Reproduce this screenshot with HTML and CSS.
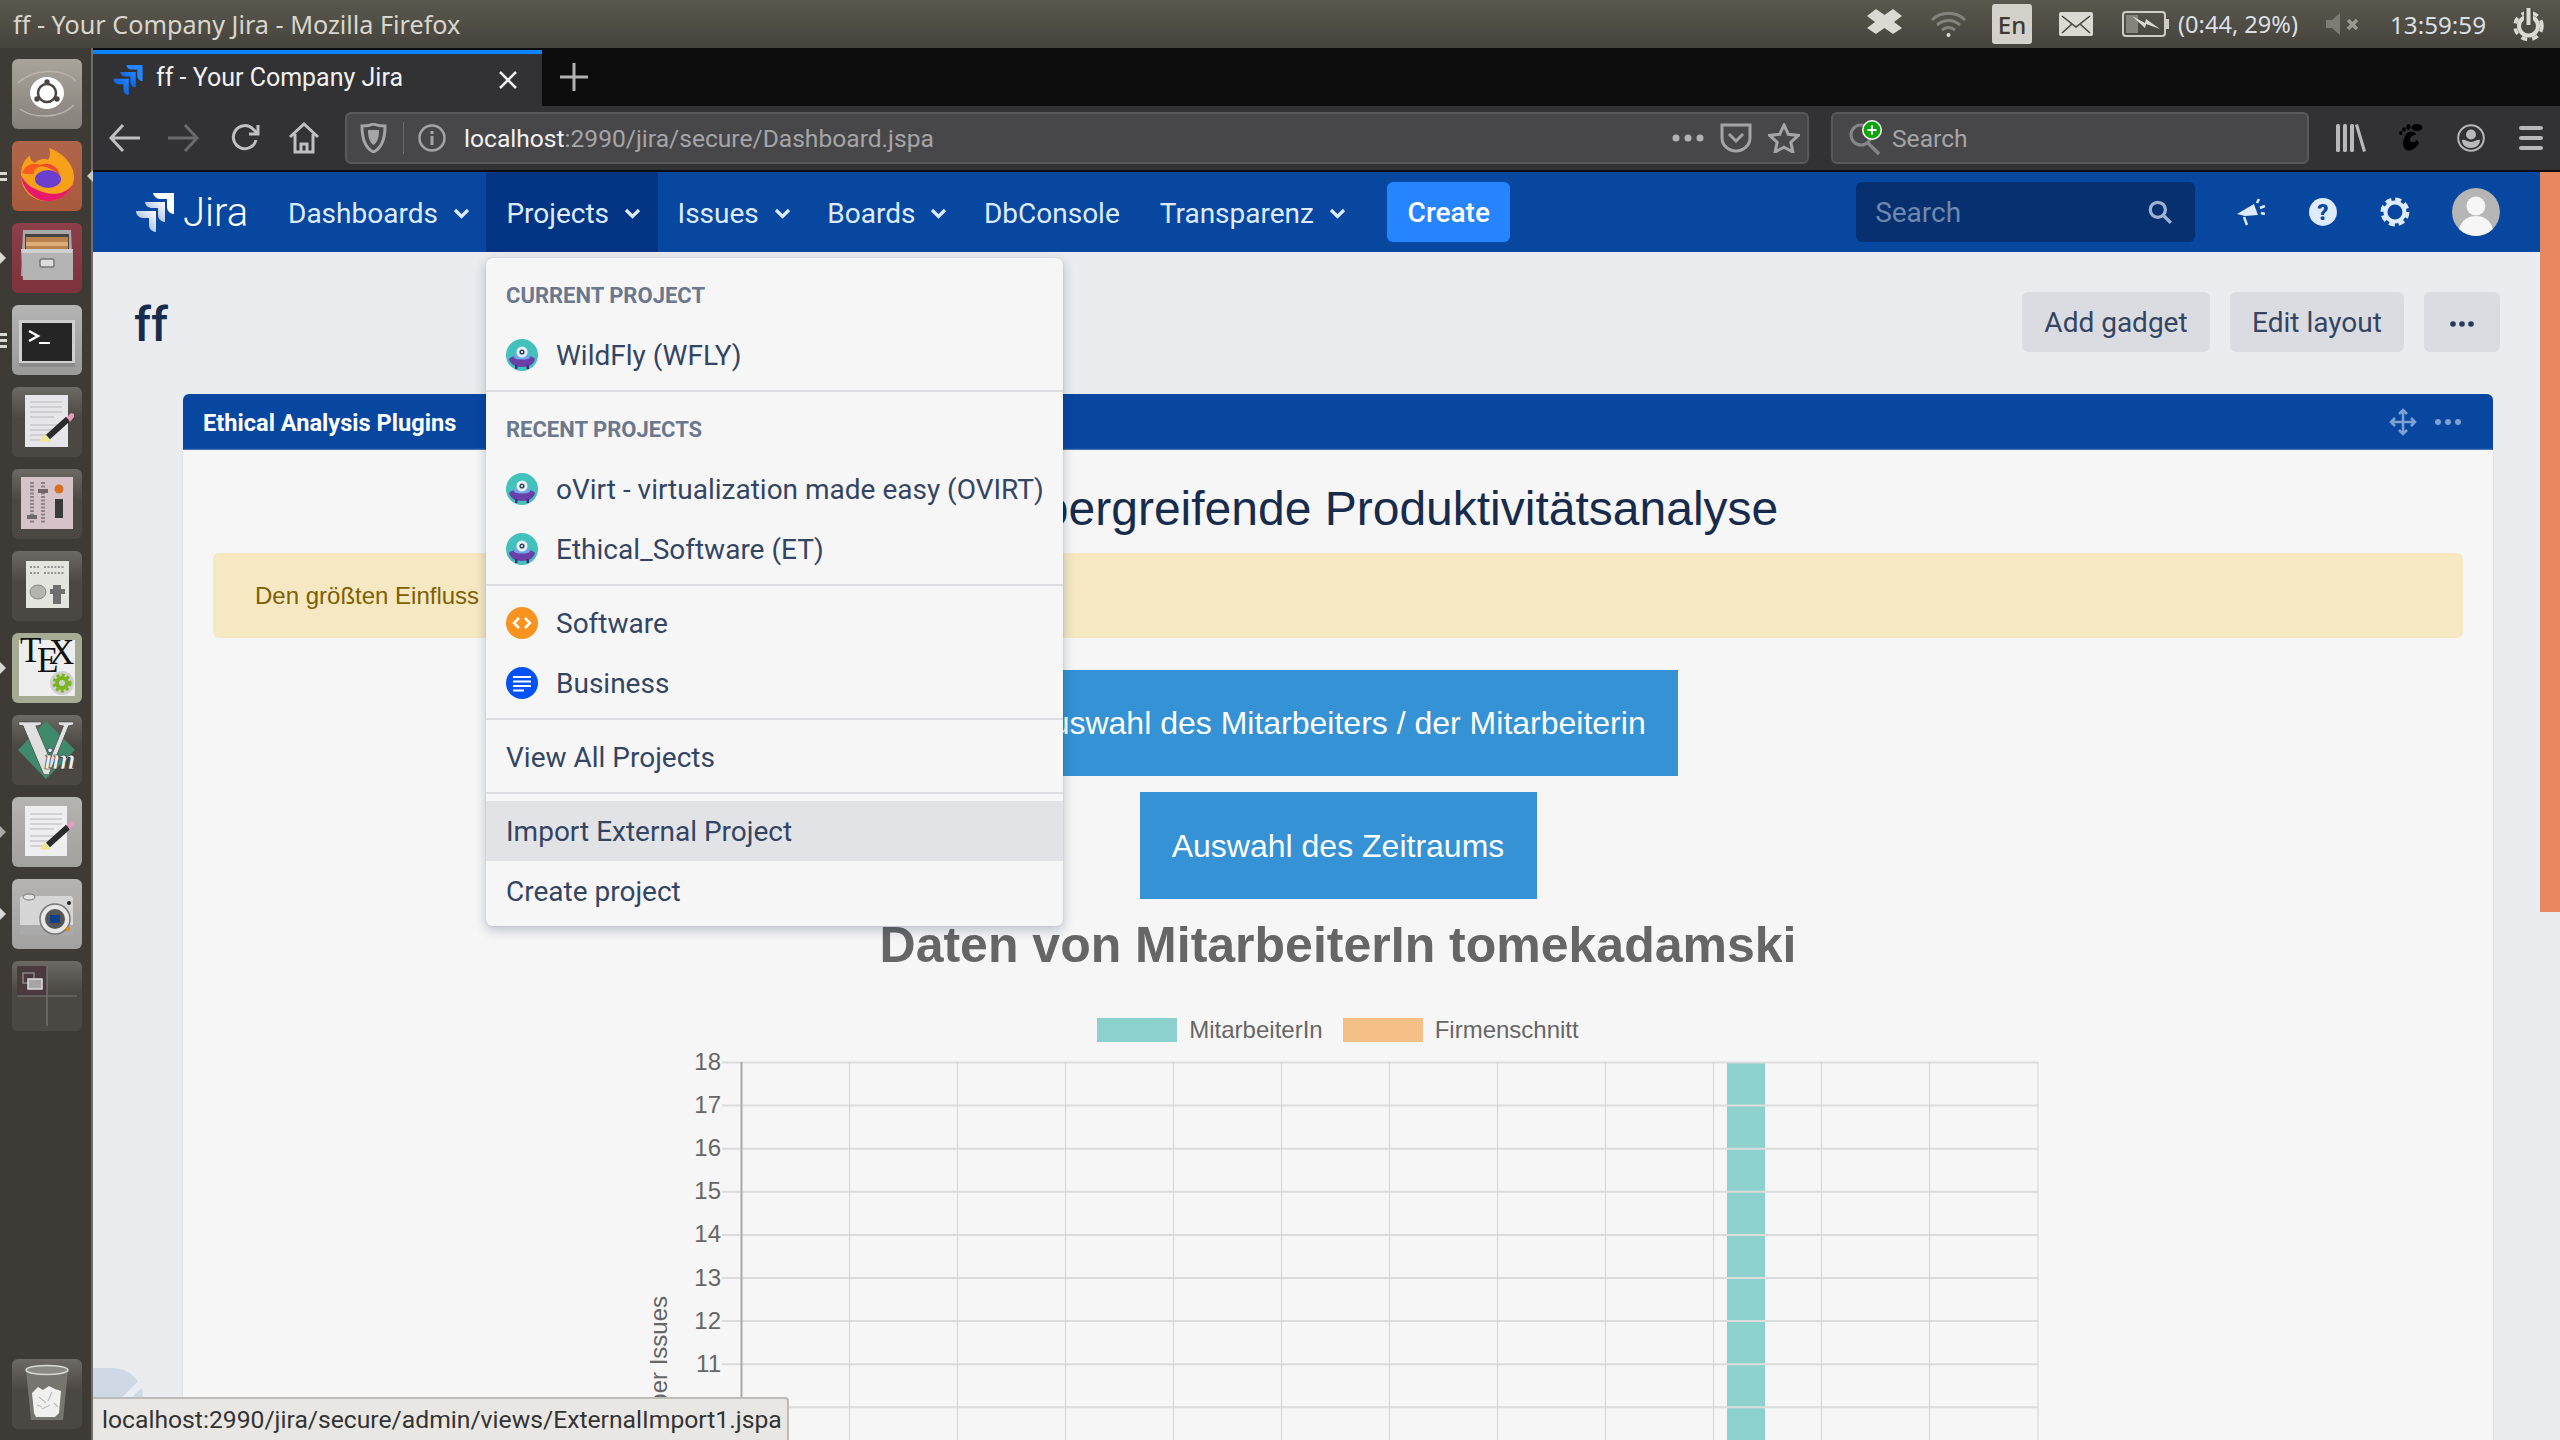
FILE: index.html
```html
<!DOCTYPE html>
<html lang="en">
<head>
<meta charset="utf-8">
<title>ff - Your Company Jira - Mozilla Firefox</title>
<link rel="stylesheet" href="styles.css">
</head>
<body>
<svg class="defs" width="0" height="0">
  <defs>
    <linearGradient id="jfade" x1="1" y1="0" x2="0" y2="1"><stop offset="0" stop-color="#fff"/><stop offset="1" stop-color="#7f9fd6"/></linearGradient>
    <linearGradient id="bfade" x1="1" y1="0" x2="0" y2="1"><stop offset="0" stop-color="#2684ff"/><stop offset="1" stop-color="#0052cc"/></linearGradient>
    <symbol id="saucer" viewBox="0 0 32 32">
      <circle cx="16" cy="16" r="16" fill="#42c1bd"/>
      <path d="M3 20c4-5 22-5 26 0-1 5-6 8-13 8S4 25 3 20z" fill="#6b3fa8"/>
      <rect x="9" y="26" width="2.5" height="4" fill="#4b2a80"/><rect x="20.5" y="26" width="2.5" height="4" fill="#4b2a80"/>
      <path d="M8 19a8 8 0 0 1 16 0c-4 2-12 2-16 0z" fill="#6ea8e6"/>
      <circle cx="16" cy="13" r="5.5" fill="#e8f0fb"/><circle cx="16" cy="13" r="2.6" fill="#345"/><circle cx="16" cy="13" r="1" fill="#fff"/>
    </symbol>
  </defs>
</svg>

<header class="topbar">
  <div class="win-title">ff - Your Company Jira - Mozilla Firefox</div>
  <div class="tray">
    <svg class="tr-dropbox" width="35" height="30" viewBox="0 0 35 30"><path d="M9 0l8.500 6L26 0l9 7-8 6 8 6-9 6-8.500-6L9 25l-9-6 8-6-8-6z" fill="#dcd9d2"/></svg>
    <svg class="tr-wifi" width="37" height="28" viewBox="0 0 37 28" fill="none" stroke="#85837c" stroke-width="3"><path d="M2 10c9-9 24-9 33 0"/><path d="M7 15c7-6 16-6 23 0"/><path d="M12 20c4-3 9-3 13 0"/><circle cx="18.500" cy="25" r="2" fill="#dcd9d2" stroke="none"/></svg>
    <div class="tr-en">En</div>
    <svg class="tr-mail" width="34" height="24" viewBox="0 0 34 24"><rect width="34" height="24" rx="2" fill="#dcd9d2"/><path d="M3 4l14 11L31 4M3 21l10-9M31 21l-10-9" fill="none" stroke="#45433c" stroke-width="1.500"/></svg>
    <svg class="tr-batt" width="48" height="26" viewBox="0 0 48 26"><rect x="1" y="1" width="42" height="24" rx="3" fill="none" stroke="#cfccc5" stroke-width="2"/><rect x="4" y="4" width="12" height="18" fill="#85837c"/><rect x="44" y="8" width="3" height="10" fill="#cfccc5"/><path d="M10 5l13 7 1-4 14 10-14-5-1 4z" fill="#dcd9d2"/></svg>
    <div class="tr-text tr-pct">(0:44, 29%)</div>
    <svg class="tr-mute" width="34" height="24" viewBox="0 0 34 24"><path d="M0 8h6l8-7v22l-8-7H0z" fill="#7d7b74"/><path d="M22 8l9 9m0-9l-9 9" stroke="#9a9890" stroke-width="3.500"/></svg>
    <div class="tr-text tr-clock">13:59:59</div>
    <svg class="tr-power" width="33" height="33" viewBox="0 0 33 33"><circle cx="16.500" cy="18" r="9.500" fill="none" stroke="#dcd9d2" stroke-width="4"/><circle cx="16.500" cy="18" r="13.500" fill="none" stroke="#dcd9d2" stroke-width="3.500" stroke-dasharray="6 5.200"/><rect x="12" y="0" width="9" height="18" fill="#4d4a42"/><rect x="14.500" y="0" width="4" height="17" fill="#dcd9d2"/></svg>
  </div>
</header>

<div class="desktop">
  <aside class="launcher">
    <div class="tile t-dash">
      <svg width="70" height="70" viewBox="0 0 70 70"><path d="M6 24c14-14 44-16 58-2M8 50c14 10 40 10 54-4" fill="none" stroke="#b9b5ad" stroke-width="1.500"/><ellipse cx="35" cy="34" rx="17" ry="16" fill="#fff"/><circle cx="35" cy="34" r="9" fill="none" stroke="#4a4540" stroke-width="2.500"/><circle cx="35" cy="23" r="2.700" fill="#4a4540"/><circle cx="25" cy="40" r="2.700" fill="#4a4540"/><circle cx="45" cy="40" r="2.700" fill="#4a4540"/></svg>
    </div>
    <div class="tile t-fox">
      <span class="pip pip-l pip-double"></span><span class="pip pip-r"></span>
      <svg width="70" height="70" viewBox="0 0 70 70"><path d="M9 34C9 22 15 16 18 15c0 4 2 5 5 7 3-4 10-5 13-3 3-5 2-9 1-12 12 4 25 15 25 29 0 13-12 24-27 24S9 49 9 34z" fill="#f7a11b"/><path d="M9 34c1 13 12 26 27 26 12 0 22-8 25-17-5 8-16 12-27 9C23 49 13 44 9 34z" fill="#e8186c"/><path d="M10 32c3-8 12-12 20-7-5 1-9 4-8 8-5 0-9 0-12-1z" fill="#f9591f"/><ellipse cx="36" cy="38" rx="13" ry="9" fill="#6a3fd0"/><path d="M26 25c8-5 20-2 22 10-6-7-14-10-22-10z" fill="#ef4a2a"/></svg>
    </div>
    <div class="tile t-files">
      <span class="pip pip-l"></span>
      <svg width="70" height="70" viewBox="0 0 70 70"><path d="M11 7h48l2 46H9z" fill="#a8a8a8"/><rect x="13" y="11" width="44" height="15" fill="#444"/><rect x="14" y="14" width="42" height="12" fill="#b9814c"/><rect x="14" y="19" width="42" height="4" fill="#e0ad78"/><path d="M9 26h52v31H11z" fill="#b4b4b4"/><path d="M9 26h52l-1 4H10z" fill="#d0d0d0"/><rect x="28" y="36" width="14" height="8" rx="2" fill="#dcdcdc" stroke="#777" stroke-width="1.500"/></svg>
    </div>
    <div class="tile t-term">
      <span class="pip pip-l pip-triple"></span>
      <svg width="70" height="70" viewBox="0 0 70 70"><rect x="7" y="15" width="56" height="47" fill="#cfcfcf"/><rect x="7" y="58" width="56" height="4" fill="#8b8b8b"/><rect x="10" y="18" width="50" height="38" fill="#252525"/><path d="M17 26l9 5-9 5" fill="none" stroke="#fff" stroke-width="2.500"/><rect x="27" y="37" width="11" height="2" fill="#fff"/></svg>
    </div>
    <div class="tile t-dark">
      <svg width="70" height="70" viewBox="0 0 70 70"><rect x="13" y="8" width="43" height="52" fill="#e6e6ea"/><g stroke="#b7b7bd" stroke-width="1"><path d="M18 15h32M18 20h32M18 25h32M18 30h24M18 38h32M18 43h24M18 48h18M18 53h14"/></g><path d="M36 50l20-18" stroke="#2b2b2b" stroke-width="6"/><path d="M55 30l4-4 3 1 0 3-4 5z" fill="#e59ac0"/><path d="M32 47l7 7-6 1-5-1z" fill="#eee691"/></svg>
    </div>
    <div class="tile t-dark">
      <svg width="70" height="70" viewBox="0 0 70 70"><rect x="9" y="8" width="52" height="52" fill="#d6c3ca"/><g stroke="#8b8589" stroke-width="4" stroke-dasharray="2 1.500"><path d="M20 13v42M31 13v42"/></g><rect x="15" y="46" width="10" height="4" fill="#6d6668"/><rect x="26" y="20" width="10" height="4" fill="#6d6668"/><circle cx="47" cy="20" r="4.500" fill="#d9701f"/><rect x="43" y="30" width="8" height="19" fill="#3a3a3a"/></svg>
    </div>
    <div class="tile t-dark">
      <svg width="70" height="70" viewBox="0 0 70 70"><rect x="14" y="10" width="43" height="47" fill="#e4e4df"/><g stroke="#777" stroke-width="1.500" stroke-dasharray="2 1.500"><path d="M18 16h10M32 16h20M18 22h10M32 22h20"/></g><ellipse cx="26" cy="41" rx="8" ry="7" fill="#b4b4af" stroke="#888"/><path d="M41 34h8v4h4v5h-4v10h-8V43h-3v-5h3z" fill="#6e6e6e"/></svg>
    </div>
    <div class="tile t-tex">
      <span class="pip pip-l"></span>
      <svg width="70" height="70" viewBox="0 0 70 70"><rect x="7" y="7" width="56" height="56" fill="#eeeeee"/><text class="tex" x="8" y="29">T</text><text class="tex" x="25" y="39">E</text><text class="tex" x="37" y="31">X</text><circle cx="50" cy="50" r="12" fill="#cfcfcf"/><circle cx="50" cy="50" r="5" fill="none" stroke="#7ab51d" stroke-width="4"/><circle cx="50" cy="50" r="8" fill="none" stroke="#7ab51d" stroke-width="3" stroke-dasharray="3 2.300"/></svg>
    </div>
    <div class="tile t-dark">
      <svg width="70" height="70" viewBox="0 0 70 70"><path d="M34 6l29 29-29 29L6 35z" fill="#3f8a6d"/><text class="vim-v" x="6" y="58">V</text><text class="vim-im" x="32" y="54">im</text></svg>
    </div>
    <div class="tile t-light">
      <span class="pip pip-l pip-hollow"></span>
      <svg width="70" height="70" viewBox="0 0 70 70"><rect x="13" y="9" width="42" height="50" fill="#eeeef1"/><g stroke="#b7b7bd" stroke-width="1"><path d="M18 17h32M18 22h32M18 27h32M18 32h24M18 39h32M18 44h22M18 49h16"/></g><path d="M36 48l20-18" stroke="#2b2b2b" stroke-width="6"/><path d="M55 28l4-4 3 1 0 3-4 5z" fill="#e59ac0"/><path d="M32 45l7 7-6 1-5-1z" fill="#eee691"/></svg>
    </div>
    <div class="tile t-light">
      <span class="pip pip-l"></span>
      <svg width="70" height="70" viewBox="0 0 70 70"><rect x="8" y="17" width="53" height="39" rx="3" fill="#d6d6d6"/><rect x="8" y="46" width="53" height="10" fill="#aaa"/><ellipse cx="17" cy="18" rx="6" ry="3" fill="#e2e2e2" stroke="#777"/><circle cx="43" cy="40" r="15" fill="#e6e6e6" stroke="#777" stroke-width="1.500"/><circle cx="43" cy="40" r="10" fill="#555"/><rect x="38" y="36" width="10" height="8" fill="#0f3f8a"/><circle cx="57" cy="24" r="2" fill="#222"/><rect x="54" y="48" width="4" height="4" fill="#e08a1a"/></svg>
    </div>
    <div class="tile t-dark t-work">
      <svg width="70" height="70" viewBox="0 0 70 70"><rect x="5" y="5" width="30" height="30" fill="#4a3a40"/><path d="M35 5v60M5 35h60" stroke="#7c7a76" stroke-width="1.200"/><rect x="11" y="12" width="11" height="10" fill="none" stroke="#888" stroke-width="1.500"/><rect x="16" y="18" width="14" height="10" fill="#a8a4a6" stroke="#ddd" stroke-width="1.500"/></svg>
    </div>
    <div class="tile t-dark t-trash">
      <svg width="70" height="70" viewBox="0 0 70 70"><path d="M14 11h42l-5 50H19z" fill="#77756f"/><ellipse cx="35" cy="11" rx="21" ry="4.500" fill="#8b8a85" stroke="#d8d8d5" stroke-width="1.500"/><path d="M20 34l6-6 5 3 6-4 6 3 6 2-2 22-4 4H24l-2-4z" fill="#f0f0ee"/><path d="M27 38l7 6M40 33l-4 9M30 50l8-4M25 46l5 2M42 44l4 4" stroke="#bdbdbb" stroke-width="1.200"/></svg>
    </div>
  </aside>

  <div class="browser">
    <div class="tabbar">
      <div class="tab">
        <svg class="tab-logo" width="30" height="30" viewBox="0 0 38 39">
          <path d="M17 0h21v21a7 7 0 0 1-7-7V6h-7a7 7 0 0 1-7-6z" fill="#2684ff"/>
          <path d="M9 9h20v20a7 7 0 0 1-7-7v-7h-7a7 7 0 0 1-6-6z" fill="url(#bfade)"/>
          <path d="M0 18h20v21a7 7 0 0 1-7-7v-7H7a7 7 0 0 1-7-7z" fill="url(#bfade)"/>
        </svg>
        <span class="tab-title">ff - Your Company Jira</span>
        <svg class="tab-close" width="20" height="20" viewBox="0 0 20 20"><path d="M2 2l16 16M18 2L2 18" stroke="#f1f1f1" stroke-width="2.500"/></svg>
      </div>
      <svg class="tab-new" width="28" height="30" viewBox="0 0 28 30"><path d="M14 1v28M0 15h28" stroke="#b1b1b3" stroke-width="3"/></svg>
    </div>

    <div class="toolbar">
      <svg class="tb-back" width="32" height="30" viewBox="0 0 32 30" fill="none" stroke="#c0c0c2" stroke-width="3"><path d="M32 15H3M15 2L3 15l12 13"/></svg>
      <svg class="tb-fwd" width="32" height="30" viewBox="0 0 32 30" fill="none" stroke="#6a6a6c" stroke-width="3"><path d="M0 15h29M17 2l12 13-12 13"/></svg>
      <svg class="tb-reload" width="30" height="30" viewBox="0 0 30 30" fill="none" stroke="#c0c0c2" stroke-width="3"><path d="M26 17a11.500 11.500 0 1 1-3-11l5 5"/><path d="M28 2v9h-9" /></svg>
      <svg class="tb-home" width="32" height="32" viewBox="0 0 32 32" fill="none" stroke="#c0c0c2" stroke-width="3"><path d="M2 15L16 2l14 13M7 12v18h18V12M13 30v-8h6v8"/></svg>
      <div class="urlbar">
        <svg class="ub-shield" width="27" height="30" viewBox="0 0 27 30"><path d="M2 3c7 0 9-1 11.500-2C16 2 18 3 25 3c0 13-3 22-11.500 26C5 25 2 16 2 3z" fill="none" stroke="#a5a5a7" stroke-width="3"/><path d="M8 7h11c0 8-2 13-5.500 15C10 20 8 15 8 7z" fill="#a5a5a7"/></svg>
        <span class="ub-sep"></span>
        <svg class="ub-info" width="28" height="28" viewBox="0 0 28 28"><circle cx="14" cy="14" r="12.500" fill="none" stroke="#a5a5a7" stroke-width="2.500"/><rect x="12.500" y="12" width="3" height="9" fill="#a5a5a7"/><rect x="12.500" y="7" width="3" height="3" fill="#a5a5a7"/></svg>
        <div class="ub-url"><span class="ub-host">localhost</span>:2990/jira/secure/Dashboard.jspa</div>
        <svg class="ub-dots" width="32" height="8" viewBox="0 0 32 8" fill="#b1b1b3"><circle cx="4" cy="4" r="3.500"/><circle cx="16" cy="4" r="3.500"/><circle cx="28" cy="4" r="3.500"/></svg>
        <svg class="ub-pocket" width="32" height="30" viewBox="0 0 32 30" fill="none" stroke="#a5a5a7" stroke-width="3"><path d="M2 2h28v13a14 13 0 0 1-28 0z"/><path d="M9 11l7 7 7-7"/></svg>
        <svg class="ub-star" width="32" height="30" viewBox="0 0 32 30"><path d="M16 2l4.300 9.300 10 1.100-7.500 6.800 2.100 9.800L16 24.100 7.100 29l2.100-9.800-7.500-6.800 10-1.100z" fill="none" stroke="#a5a5a7" stroke-width="3"/></svg>
      </div>
      <div class="searchbar">
        <svg class="sb-icon" width="34" height="36" viewBox="0 0 34 36"><circle cx="13" cy="15" r="10" fill="none" stroke="#858587" stroke-width="3"/><path d="M20 23l11 11" stroke="#858587" stroke-width="3.500"/><circle cx="24" cy="10" r="10" fill="#fff"/><circle cx="24" cy="10" r="8.500" fill="#0ca50c"/><path d="M24 5.500v9M19.500 10h9" stroke="#fff" stroke-width="2"/></svg>
        <span class="sb-text">Search</span>
      </div>
      <svg class="tb-lib" width="30" height="28" viewBox="0 0 30 28" fill="#b8b8ba"><rect x="0" y="0" width="4" height="28" rx="1.500"/><rect x="7" y="0" width="4" height="28" rx="1.500"/><rect x="14" y="0" width="4" height="28" rx="1.500"/><path d="M19 1l3-1 8 27-3 1z"/></svg>
      <svg class="tb-foot" width="24" height="28" viewBox="0 0 24 28" fill="#000"><ellipse cx="1.800" cy="9" rx="1.600" ry="2"/><ellipse cx="5" cy="5.500" rx="1.700" ry="2.200"/><ellipse cx="9.500" cy="3" rx="2.200" ry="2.700"/><ellipse cx="18" cy="3.500" rx="5.500" ry="3.500"/><path d="M8 9c5-3 9-1 9 2-4 0-6 2-6 5 0 3 4 3 7 0l2 3c-3 6-10 10-14 6-4-5-1-12 2-16z"/></svg>
      <svg class="tb-user" width="28" height="28" viewBox="0 0 28 28"><circle cx="14" cy="14" r="12.800" fill="none" stroke="#b8b8ba" stroke-width="2"/><circle cx="14" cy="10.500" r="5" fill="#b8b8ba"/><path d="M5 16c3-1 5 2 9 2s6-3 9-2c0 5-4 8-9 8s-9-3-9-8z" fill="#b8b8ba"/></svg>
      <div class="tb-menu"><span></span><span></span><span></span></div>
    </div>

    <div class="viewport">
      <div class="page">
        <nav class="jnav">
          <svg class="jmark" width="38" height="39" viewBox="0 0 38 39">
            <path d="M17 0h21v21a7 7 0 0 1-7-7V6h-7a7 7 0 0 1-7-6z" fill="#fff"/>
            <path d="M9 9h20v20a7 7 0 0 1-7-7v-7h-7a7 7 0 0 1-6-6z" fill="url(#jfade)"/>
            <path d="M0 18h20v21a7 7 0 0 1-7-7v-7H7a7 7 0 0 1-7-7z" fill="url(#jfade)"/>
          </svg>
          <span class="jword">Jira</span>
          <a class="jitem">Dashboards<svg class="chev" width="17" height="11" viewBox="0 0 17 11"><path d="M2 2l6.500 6.500L15 2" fill="none" stroke="#deebff" stroke-width="3.200"/></svg></a>
          <a class="jitem jitem-active">Projects<svg class="chev" width="17" height="11" viewBox="0 0 17 11"><path d="M2 2l6.500 6.500L15 2" fill="none" stroke="#deebff" stroke-width="3.200"/></svg></a>
          <a class="jitem">Issues<svg class="chev" width="17" height="11" viewBox="0 0 17 11"><path d="M2 2l6.500 6.500L15 2" fill="none" stroke="#deebff" stroke-width="3.200"/></svg></a>
          <a class="jitem">Boards<svg class="chev" width="17" height="11" viewBox="0 0 17 11"><path d="M2 2l6.500 6.500L15 2" fill="none" stroke="#deebff" stroke-width="3.200"/></svg></a>
          <a class="jitem jitem-plain">DbConsole</a>
          <a class="jitem">Transparenz<svg class="chev" width="17" height="11" viewBox="0 0 17 11"><path d="M2 2l6.500 6.500L15 2" fill="none" stroke="#deebff" stroke-width="3.200"/></svg></a>
          <button class="jcreate">Create</button>
          <div class="jsearch"><span>Search</span><svg width="26" height="26" viewBox="0 0 24 24" fill="none" stroke="#9fb3d1" stroke-width="3"><circle cx="10" cy="10" r="7"/><path d="M15 15l7 7"/></svg></div>
          <svg class="ji-mega" width="30" height="30" viewBox="0 0 30 30"><path d="M1 17L18 7l4 11-13 1z" fill="#deebff"/><path d="M8 20l3 8" stroke="#deebff" stroke-width="2.500"/><path d="M21 6l2-4M24 11l5-2M25 16l4 1" stroke="#deebff" stroke-width="2.500"/></svg>
          <svg class="ji-help" width="28" height="28" viewBox="0 0 28 28"><circle cx="14" cy="14" r="14" fill="#deebff"/><text class="help-q" x="14" y="22">?</text></svg>
          <svg class="ji-gear" width="30" height="30" viewBox="0 0 30 30"><circle cx="15" cy="15" r="9.500" fill="none" stroke="#deebff" stroke-width="4"/><circle cx="15" cy="15" r="12.500" fill="none" stroke="#deebff" stroke-width="4" stroke-dasharray="6 3.800"/></svg>
          <svg class="ji-avatar" width="48" height="48" viewBox="0 0 48 48"><circle cx="24" cy="24" r="24" fill="#b5b5b5"/><circle cx="24" cy="18" r="9.500" fill="#f6f6f6"/><path d="M7 41c3-10 10-13 17-13s14 3 17 13a24 24 0 0 1-34 0z" fill="#f6f6f6"/></svg>
        </nav>

        <main class="content">
          <div class="dash-head">
            <h1 class="dash-title">ff</h1>
            <div class="dash-actions">
              <button class="btn btn-add">Add gadget</button>
              <button class="btn btn-edit">Edit layout</button>
              <button class="btn btn-more"><svg width="24" height="6" viewBox="0 0 24 6" fill="#253858"><circle cx="3" cy="3" r="2.800"/><circle cx="12" cy="3" r="2.800"/><circle cx="21" cy="3" r="2.800"/></svg></button>
            </div>
          </div>

          <section class="gadget">
            <div class="gadget-head">
              <span class="gadget-title">Ethical Analysis Plugins</span>
              <div class="gadget-tools">
                <svg width="28" height="28" viewBox="0 0 28 28" fill="none" stroke="#7fa0d2" stroke-width="2.500"><path d="M14 2v24M2 14h24M10 6l4-4 4 4M10 22l4 4 4-4M6 10l-4 4 4 4M22 10l4 4-4 4"/></svg>
                <svg width="26" height="6" viewBox="0 0 26 6" fill="#7fa0d2"><circle cx="3" cy="3" r="3"/><circle cx="13" cy="3" r="3"/><circle cx="23" cy="3" r="3"/></svg>
              </div>
            </div>
            <div class="gadget-body">
              <h2 class="an-title">Teamübergreifende Produktivitätsanalyse</h2>
              <div class="an-warning">Den größten Einfluss</div>
              <button class="an-btn an-btn-a">Auswahl des Mitarbeiters / der Mitarbeiterin</button>
              <button class="an-btn an-btn-b">Auswahl des Zeitraums</button>
              <h2 class="an-sub">Daten von MitarbeiterIn tomekadamski</h2>
              <div class="legend">
                <span class="sw sw-a"></span><span class="lg-a">MitarbeiterIn</span>
                <span class="sw sw-b"></span><span>Firmenschnitt</span>
              </div>
              <svg class="chart" width="2310" height="400" viewBox="0 0 2310 400">
                <rect class="bar" x="1544" y="12" width="38" height="388"/>
                <g class="grid-h">
                  <path d="M539 12.500H1855M539 55.600H1855M539 98.700H1855M539 141.800H1855M539 184.900H1855M539 228H1855M539 271.100H1855M539 314.200H1855M539 357.300H1855"/>
                </g>
                <g class="grid-v">
                  <path d="M666.500 12V400M774.500 12V400M882.500 12V400M990.500 12V400M1098.500 12V400M1206.500 12V400M1314.500 12V400M1422.500 12V400M1530.500 12V400M1638.500 12V400M1746.500 12V400M1855 12V400"/>
                </g>
                <path class="axis" d="M558.500 12V400"/>
                <g class="ticks">
                  <text x="538" y="20">18</text><text x="538" y="63">17</text><text x="538" y="106">16</text><text x="538" y="149">15</text><text x="538" y="192">14</text><text x="538" y="236">13</text><text x="538" y="279">12</text><text x="538" y="322">11</text><text x="538" y="365">10</text>
                </g>
                <text class="ylabel" transform="translate(484,246) rotate(-90)">Number Issues</text>
              </svg>
            </div>
          </section>
        </main>

        <div class="menu">
          <div class="msec msec-head">
            <div class="mhead">Current project</div>
            <a class="mrow"><svg class="mava" width="32" height="32"><use href="#saucer"/></svg>WildFly (WFLY)</a>
          </div>
          <div class="msec msec-head">
            <div class="mhead">Recent projects</div>
            <a class="mrow"><svg class="mava" width="32" height="32"><use href="#saucer"/></svg>oVirt - virtualization made easy (OVIRT)</a>
            <a class="mrow"><svg class="mava" width="32" height="32"><use href="#saucer"/></svg>Ethical_Software (ET)</a>
          </div>
          <div class="msec">
            <a class="mrow"><svg class="mava" width="32" height="32" viewBox="0 0 32 32"><circle cx="16" cy="16" r="16" fill="#f7931e"/><path d="M13 11l-5 5 5 5M19 11l5 5-5 5" fill="none" stroke="#fff" stroke-width="2.500"/></svg>Software</a>
            <a class="mrow"><svg class="mava" width="32" height="32" viewBox="0 0 32 32"><circle cx="16" cy="16" r="16" fill="#0052f5"/><path d="M7 10h18M7 14.500h18M7 19h18M7 23.500h11" stroke="#fff" stroke-width="2.200"/></svg>Business</a>
          </div>
          <div class="msec">
            <a class="mrow">View All Projects</a>
          </div>
          <div class="msec msec-last">
            <a class="mrow mrow-hover">Import External Project</a>
            <a class="mrow">Create project</a>
          </div>
        </div>
      </div>
      <div class="scrollbar"><div class="thumb"></div></div>
      <div class="blob"></div>
      <div class="status">localhost:2990/jira/secure/admin/views/ExternalImport1.jspa</div>
    </div>
  </div>
</div>
</body>
</html>
```
FILE: styles.css
```css
* { box-sizing: border-box; }
html, body { margin: 0; height: 100%; overflow: hidden; }
body { font-family: Roboto, "Noto Sans", sans-serif; display: flex; flex-direction: column; background: #3e3b36; }
.defs { position: absolute; }
button { font: inherit; border: 0; }

/* Ubuntu panel */
.topbar { height: 48px; flex: none; display: flex; align-items: center; justify-content: space-between; background: linear-gradient(#5a574d, #45433c); color: #d9d6cd; font-family: "Noto Sans", sans-serif; }
.win-title { padding-left: 13px; font-size: 25.2px; white-space: nowrap; }
.tray { display: flex; align-items: center; padding-right: 15px; }
.tr-en { margin-left: 25px; width: 40px; height: 40px; background: #d4d1ca; color: #3c3a34; border-radius: 3px; display: flex; align-items: center; justify-content: center; font-size: 24px; font-weight: 500; }
.tr-wifi { margin-left: 28px; }
.tr-mail { margin-left: 27px; }
.tr-batt { margin-left: 29px; }
.tr-text { color: #d9dfe6; white-space: nowrap; }
.tr-pct { margin-left: 8px; width: 122px; font-size: 23.6px; }
.tr-mute { margin-left: 26px; }
.tr-clock { margin-left: 30px; width: 96px; font-size: 24.2px; }
.tr-power { margin-left: 26px; }

.desktop { flex: 1; min-height: 0; display: flex; }

/* launcher */
.launcher { width: 93px; flex: none; background: #3e3b36; border-right: 2px solid #6e6d6a; padding: 11px 11px 11px 12px; display: flex; flex-direction: column; gap: 12px; }
.tile { position: relative; width: 70px; height: 70px; border-radius: 6px; flex: none; }
.tile svg { display: block; }
.t-dash { background: linear-gradient(#a8a49c, #85817a); }
.t-fox { background: linear-gradient(#b0654a, #a85a3b); }
.t-files { background: linear-gradient(#8b3f48, #7e323c); }
.t-term { background: linear-gradient(#b4b4b4, #9a9a9a); }
.t-dark { background: linear-gradient(#6d6a66 0, #4b4844 45%, #4b4844 100%); }
.t-tex { background: #a6ab93; }
.t-light { background: linear-gradient(#b5b4b2, #a2a19f); }
.t-trash { margin-top: auto; }
.pip { position: absolute; top: 29px; width: 0; height: 0; border-top: 6px solid transparent; border-bottom: 6px solid transparent; }
.pip-l { left: -12px; border-left: 6px solid #d8d8d5; }
.pip-r { right: -11px; border-right: 6px solid #c9c9c6; }
.pip-double, .pip-triple { border: 0; width: 7px; height: 3px; left: -12px; top: 31px; background: #d8d8d5; box-shadow: 0 6px 0 #d8d8d5; }
.pip-triple { top: 28px; box-shadow: 0 6px 0 #d8d8d5, 0 12px 0 #d8d8d5; }
.pip-hollow { border-left-color: #a9a9a6; }
.tex { font-family: "Liberation Serif", serif; font-size: 35px; fill: #111; }
.vim-v { font-family: "Liberation Serif", serif; font-weight: bold; font-size: 78px; fill: #e0e0e0; stroke: #333; stroke-width: .5; }
.vim-im { font-family: "Liberation Serif", serif; font-style: italic; font-weight: bold; font-size: 30px; fill: #eee; stroke: #222; stroke-width: .6; }

/* browser chrome */
.browser { flex: 1; min-width: 0; display: flex; flex-direction: column; position: relative; }
.tabbar { height: 58px; flex: none; background: #0c0c0d; display: flex; align-items: center; }
.tab { width: 449px; height: 56px; margin-top: 2px; background: #323234; border-top: 4px solid #0a84ff; display: flex; align-items: center; padding: 0 24px 0 20px; color: #f1f1f1; font-size: 25px; }
.tab-logo { flex: none; }
.tab-title { margin-left: 13px; flex: 1; white-space: nowrap; padding-bottom: 6px; }
.tab-new { margin-left: 18px; }
.toolbar { height: 66px; flex: none; background: #323234; border-bottom: 2px solid #0c0c0d; display: flex; align-items: center; padding-left: 15px; }
.tb-fwd { margin-left: 28px; }
.tb-reload { margin-left: 30px; }
.tb-home { margin-left: 28px; }
.urlbar { margin-left: 25px; width: 1464px; height: 52px; background: #474749; border: 2px solid #59595b; border-radius: 6px; display: flex; align-items: center; padding: 0 7px 0 13px; }
.ub-sep { width: 1px; height: 32px; background: #6a6a6c; margin-left: 16px; }
.ub-info { margin-left: 14px; }
.ub-url { margin-left: 18px; flex: 1; font-size: 24.6px; color: #a5a5a7; white-space: nowrap; }
.ub-host { color: #f1f1f1; }
.ub-pocket { margin-left: 16px; }
.ub-star { margin-left: 16px; }
.searchbar { margin-left: 22px; width: 478px; height: 52px; background: #474749; border: 2px solid #59595b; border-radius: 6px; display: flex; align-items: center; padding-left: 15px; }
.sb-text { margin-left: 10px; color: #a5a5a7; font-size: 24.6px; }
.tb-lib { margin-left: 27px; }
.tb-foot { margin-left: 33px; }
.tb-user { margin-left: 34px; }
.tb-menu { margin-left: 34px; width: 24px; display: flex; flex-direction: column; gap: 6px; }
.tb-menu span { height: 4px; border-radius: 2px; background: #b8b8ba; }

/* viewport */
.viewport { flex: 1; min-height: 0; display: flex; position: relative; overflow: hidden; }
.page { flex: 1; min-width: 0; position: relative; background: #ebecef; }
.scrollbar { width: 20px; flex: none; background: #ebecef; }
.thumb { height: 740px; background: #e8875f; }

/* jira nav */
.jnav { height: 80px; background: #0747a0; display: flex; align-items: center; padding: 0 40px 0 43px; color: #deebff; font-size: 28px; }
.jmark { flex: none; }
.jword { margin: 0 21px 0 9px; width: 64px; font-size: 40px; font-weight: 300; color: #fff; }
.jitem { height: 80px; display: flex; align-items: center; gap: 15px; padding: 3px 16.5px 0 20px; white-space: nowrap; }
.jitem-plain { padding-right: 20px; }
.jitem-active { background: #043584; }
.jcreate { margin-left: 25px; width: 123px; height: 60px; padding-top: 2px; border-radius: 6px; background: #2684ff; color: #fff; font-weight: 500; font-size: 28px; }
.jsearch { margin-left: 346px; width: 340px; height: 60px; border-radius: 6px; background: #06306f; display: flex; align-items: center; justify-content: space-between; padding: 0 22px 0 19px; color: #6f88ad; }
.ji-mega { margin-left: 41px; }
.ji-help { margin-left: 43px; }
.ji-gear { margin-left: 43px; }
.ji-avatar { margin-left: 42px; }
.help-q { font-family: Roboto, sans-serif; font-weight: 900; font-size: 22px; fill: #0747a0; text-anchor: middle; }

/* dashboard */
.content { display: flex; flex-direction: column; height: calc(100% - 80px); }
.dash-head { height: 142px; flex: none; display: flex; justify-content: space-between; align-items: flex-start; padding: 40px 40px 0 41px; }
.dash-title { margin: 3px 0 0; font-size: 48px; line-height: 60px; font-weight: 500; color: #172b4d; }
.dash-actions { display: flex; gap: 20px; }
.btn { height: 60px; padding-top: 2px; border-radius: 6px; background: #dadce2; color: #344563; font-size: 28px; }
.btn-add { width: 188px; }
.btn-edit { width: 174px; }
.btn-more { width: 76px; padding-bottom: 12px; }
.gadget { margin: 0 47px 0 90px; flex: 1; min-height: 0; }
.gadget-head { height: 56px; background: #0747a0; border-radius: 6px 6px 0 0; display: flex; align-items: center; justify-content: space-between; padding: 0 32px 0 20px; color: #fff; }
.gadget-title { font-weight: 700; font-size: 23.6px; padding-top: 2px; }
.gadget-tools { display: flex; align-items: center; gap: 18px; }
.gadget-body { background: #f6f6f6; box-shadow: 0 0 2px #c8ccd4; display: flex; flex-direction: column; align-items: center; height: 1000px; font-family: "Liberation Sans", sans-serif; }
.an-title { margin: 31px 0 0; height: 56px; line-height: 56px; font-size: 48px; font-weight: 400; color: #172b4d; white-space: nowrap; }
.an-warning { margin-top: 16px; align-self: stretch; margin-left: 30px; margin-right: 30px; height: 85px; background: #f6e8c3; border-radius: 6px; color: #7f6000; font-size: 24px; line-height: 86px; padding-left: 42px; }
.an-btn { background: #3492d5; color: #fff; font-family: "Liberation Sans", sans-serif; font-size: 32px; flex: none; padding-top: 1px; }
.an-btn-a { margin-top: 32px; width: 680px; height: 106px; }
.an-btn-b { margin-top: 16px; width: 397px; height: 107px; padding-top: 2px; }
.an-sub { margin: 18px 0 0; height: 56px; line-height: 56px; font-size: 50px; font-weight: 700; color: #666; white-space: nowrap; }
.legend { margin-top: 45px; height: 24px; display: flex; align-items: center; font-size: 24px; color: #666; }
.sw { width: 80px; height: 24px; margin-right: 12px; }
.sw-a { background: #8dd1ce; }
.sw-b { background: #f5bf88; }
.lg-a { margin-right: 20px; }
.chart { margin-top: 8px; display: block; flex: none; }
.grid-h path { stroke: #dcdcdc; stroke-width: 2; fill: none; }
.grid-v path { stroke: #d4d4d4; stroke-width: 1; fill: none; }
.axis { stroke: #a9a9a9; stroke-width: 2; fill: none; }
.bar { fill: #8dd1ce; }
.ticks text { font-size: 24px; fill: #666; text-anchor: end; }
.ylabel { font-size: 24px; fill: #666; text-anchor: end; }

/* dropdown */
.menu { position: absolute; left: 393px; top: 86px; width: 577px; background: #f6f6f6; border-radius: 6px; box-shadow: 0 4px 12px rgba(9,30,66,.25), 0 0 1px rgba(9,30,66,.31); color: #344563; font-size: 28px; }
.msec { padding: 7px 0 5px; border-bottom: 2px solid #dcdde3; }
.msec-head { padding-top: 12px; }
.msec-last { border-bottom: 0; padding-top: 7px; }
.mhead { height: 50px; margin-bottom: 5px; padding-left: 20px; display: flex; align-items: center; text-transform: uppercase; font-size: 22px; font-weight: 700; color: #6b778c; }
.mrow { height: 60px; display: flex; align-items: center; padding-left: 20px; white-space: nowrap; }
.mrow-hover { background: #e2e3e7; }
.mava { margin-right: 18px; flex: none; }

/* overlays */
.blob { position: absolute; left: 0; bottom: 0; width: 50px; height: 72px; background: linear-gradient(135deg, #cfd9e6 0 48%, #e9edf3 48% 56%, #cfd9e6 56%); border-radius: 0 30px 0 0; }
.status { position: absolute; left: 0; bottom: 0; width: 696px; height: 43px; background: #e9e7e4; border: 2px solid #bdbbb8; border-width: 2px 2px 0 0; border-radius: 0 4px 0 0; color: #333; font-size: 24.7px; line-height: 41px; padding-left: 9px; white-space: nowrap; }
```
